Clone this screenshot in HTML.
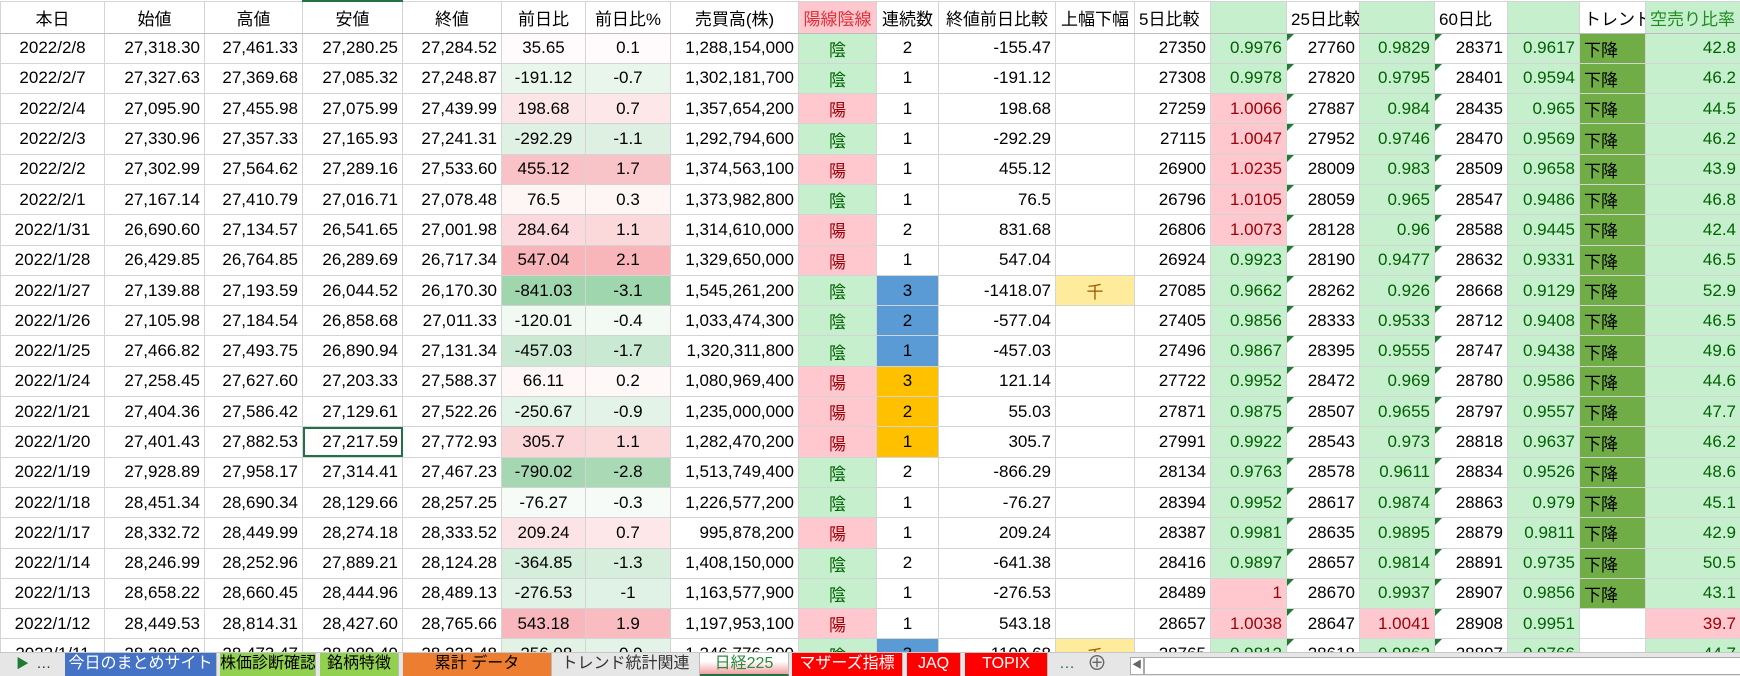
<!DOCTYPE html>
<html><head><meta charset="utf-8"><style>
body{margin:0;width:1740px;height:675px;overflow:hidden;background:#fff;font-family:"Liberation Sans","Noto Sans CJK JP",sans-serif;}
#wrap{position:absolute;left:0;top:0;width:1740px;height:652px;overflow:hidden;}
table{border-collapse:collapse;table-layout:fixed;width:1740px;font-size:17px;color:#000;}
td{border:1px solid #d4d4d4;height:30.3px;padding:0 4px;white-space:nowrap;overflow:hidden;text-align:right;box-sizing:border-box;}
tr.h td{height:32px;text-align:center;border-bottom:1px solid #bdbdbd;}
.c{text-align:center}.l{text-align:left!important}
.g{background:#c6efce;color:#006100}
.r{background:#ffc7ce;color:#9c0006}
.rh{background:#ffc7ce;color:#e0303a}
.gh{background:#c6efce;color:#228b22}
.b{background:#5b9bd5}.o{background:#ffc000}
.y{background:#ffeb9c;color:#9c5700;text-align:center}
.t{background:#70ad47;text-align:left}
.tri{position:relative}
.tri:before{content:"";position:absolute;left:0;top:0;border-top:7px solid #1e7b34;border-right:7px solid transparent;}
.sel{outline:2px solid #217346;outline-offset:-2px}
#tabs{position:absolute;left:0;top:652px;width:1740px;height:23px;background:#e6e6e6;border-top:1px solid #c8c8c8;font-size:16px;}
.tab{position:absolute;top:0;height:23px;line-height:22px;text-align:center;border-right:1px solid #bbb;box-sizing:border-box;white-space:nowrap;overflow:hidden;}
</style></head><body>
<div id="wrap"><table>
<colgroup><col style="width:104px"><col style="width:100px"><col style="width:98px"><col style="width:100px"><col style="width:99px"><col style="width:84px"><col style="width:85px"><col style="width:128px"><col style="width:78px"><col style="width:62px"><col style="width:117px"><col style="width:79px"><col style="width:76px"><col style="width:76px"><col style="width:73px"><col style="width:75px"><col style="width:73px"><col style="width:72px"><col style="width:66px"><col style="width:95px"></colgroup>
<tr class="h"><td>本日</td><td>始値</td><td>高値</td><td style="border-top:2px solid #217346">安値</td><td>終値</td><td>前日比</td><td>前日比%</td><td>売買高(株)</td><td class="rh">陽線陰線</td><td>連続数</td><td>終値前日比較</td><td>上幅下幅</td><td class="l">5日比較</td><td class="g"></td><td class="l">25日比較</td><td class="g"></td><td class="l">60日比</td><td class="g"></td><td class="l">トレンド</td><td class="gh l">空売り比率</td></tr>
<tr><td class="c">2022/2/8</td><td>27,318.30</td><td>27,461.33</td><td>27,280.25</td><td>27,284.52</td><td class="c" style="background:rgb(255,250,251)">35.65</td><td class="c" style="background:rgb(255,251,252)">0.1</td><td>1,288,154,000</td><td class="g c">陰</td><td class="c">2</td><td>-155.47</td><td></td><td>27350</td><td class="g">0.9976</td><td class="tri">27760</td><td class="g">0.9829</td><td class="tri">28371</td><td class="g">0.9617</td><td class="t">下降</td><td class="g">42.8</td></tr>
<tr><td class="c">2022/2/7</td><td>27,327.63</td><td>27,369.68</td><td>27,085.32</td><td>27,248.87</td><td class="c" style="background:rgb(233,246,236)">-191.12</td><td class="c" style="background:rgb(233,246,236)">-0.7</td><td>1,302,181,700</td><td class="g c">陰</td><td class="c">1</td><td>-191.12</td><td></td><td>27308</td><td class="g">0.9978</td><td class="tri">27820</td><td class="g">0.9795</td><td class="tri">28401</td><td class="g">0.9594</td><td class="t">下降</td><td class="g">46.2</td></tr>
<tr><td class="c">2022/2/4</td><td>27,095.90</td><td>27,455.98</td><td>27,075.99</td><td>27,439.99</td><td class="c" style="background:rgb(252,229,230)">198.68</td><td class="c" style="background:rgb(253,231,232)">0.7</td><td>1,357,654,200</td><td class="r c">陽</td><td class="c">1</td><td>198.68</td><td></td><td>27259</td><td class="r">1.0066</td><td class="tri">27887</td><td class="g">0.984</td><td class="tri">28435</td><td class="g">0.965</td><td class="t">下降</td><td class="g">44.5</td></tr>
<tr><td class="c">2022/2/3</td><td>27,330.96</td><td>27,357.33</td><td>27,165.93</td><td>27,241.31</td><td class="c" style="background:rgb(222,241,226)">-292.29</td><td class="c" style="background:rgb(221,240,226)">-1.1</td><td>1,292,794,600</td><td class="g c">陰</td><td class="c">1</td><td>-292.29</td><td></td><td>27115</td><td class="r">1.0047</td><td class="tri">27952</td><td class="g">0.9746</td><td class="tri">28470</td><td class="g">0.9569</td><td class="t">下降</td><td class="g">46.2</td></tr>
<tr><td class="c">2022/2/2</td><td>27,302.99</td><td>27,564.62</td><td>27,289.16</td><td>27,533.60</td><td class="c" style="background:rgb(249,194,198)">455.12</td><td class="c" style="background:rgb(249,196,200)">1.7</td><td>1,374,563,100</td><td class="r c">陽</td><td class="c">1</td><td>455.12</td><td></td><td>26900</td><td class="r">1.0235</td><td class="tri">28009</td><td class="g">0.983</td><td class="tri">28509</td><td class="g">0.9658</td><td class="t">下降</td><td class="g">43.9</td></tr>
<tr><td class="c">2022/2/1</td><td>27,167.14</td><td>27,410.79</td><td>27,016.71</td><td>27,078.48</td><td class="c" style="background:rgb(254,245,245)">76.5</td><td class="c" style="background:rgb(254,245,245)">0.3</td><td>1,373,982,800</td><td class="g c">陰</td><td class="c">1</td><td>76.5</td><td></td><td>26796</td><td class="r">1.0105</td><td class="tri">28059</td><td class="g">0.965</td><td class="tri">28547</td><td class="g">0.9486</td><td class="t">下降</td><td class="g">46.8</td></tr>
<tr><td class="c">2022/1/31</td><td>26,690.60</td><td>27,134.57</td><td>26,541.65</td><td>27,001.98</td><td class="c" style="background:rgb(251,217,220)">284.64</td><td class="c" style="background:rgb(251,217,219)">1.1</td><td>1,314,610,000</td><td class="r c">陽</td><td class="c">2</td><td>831.68</td><td></td><td>26806</td><td class="r">1.0073</td><td class="tri">28128</td><td class="g">0.96</td><td class="tri">28588</td><td class="g">0.9445</td><td class="t">下降</td><td class="g">42.4</td></tr>
<tr><td class="c">2022/1/28</td><td>26,429.85</td><td>26,764.85</td><td>26,289.69</td><td>26,717.34</td><td class="c" style="background:rgb(248,182,187)">547.04</td><td class="c" style="background:rgb(248,182,187)">2.1</td><td>1,329,650,000</td><td class="r c">陽</td><td class="c">1</td><td>547.04</td><td></td><td>26924</td><td class="g">0.9923</td><td class="tri">28190</td><td class="g">0.9477</td><td class="tri">28632</td><td class="g">0.9331</td><td class="t">下降</td><td class="g">46.5</td></tr>
<tr><td class="c">2022/1/27</td><td>27,139.88</td><td>27,193.59</td><td>26,044.52</td><td>26,170.30</td><td class="c" style="background:rgb(159,214,173)">-841.03</td><td class="c" style="background:rgb(159,214,173)">-3.1</td><td>1,545,261,200</td><td class="g c">陰</td><td class="c b">3</td><td>-1418.07</td><td class="y">千</td><td>27085</td><td class="g">0.9662</td><td class="tri">28262</td><td class="g">0.926</td><td class="tri">28668</td><td class="g">0.9129</td><td class="t">下降</td><td class="g">52.9</td></tr>
<tr><td class="c">2022/1/26</td><td>27,105.98</td><td>27,184.54</td><td>26,858.68</td><td>27,011.33</td><td class="c" style="background:rgb(241,249,243)">-120.01</td><td class="c" style="background:rgb(243,250,244)">-0.4</td><td>1,033,474,300</td><td class="g c">陰</td><td class="c b">2</td><td>-577.04</td><td></td><td>27405</td><td class="g">0.9856</td><td class="tri">28333</td><td class="g">0.9533</td><td class="tri">28712</td><td class="g">0.9408</td><td class="t">下降</td><td class="g">46.5</td></tr>
<tr><td class="c">2022/1/25</td><td>27,466.82</td><td>27,493.75</td><td>26,890.94</td><td>27,131.34</td><td class="c" style="background:rgb(203,233,210)">-457.03</td><td class="c" style="background:rgb(202,233,210)">-1.7</td><td>1,320,311,800</td><td class="g c">陰</td><td class="c b">1</td><td>-457.03</td><td></td><td>27496</td><td class="g">0.9867</td><td class="tri">28395</td><td class="g">0.9555</td><td class="tri">28747</td><td class="g">0.9438</td><td class="t">下降</td><td class="g">49.6</td></tr>
<tr><td class="c">2022/1/24</td><td>27,258.45</td><td>27,627.60</td><td>27,203.33</td><td>27,588.37</td><td class="c" style="background:rgb(254,246,247)">66.11</td><td class="c" style="background:rgb(254,248,249)">0.2</td><td>1,080,969,400</td><td class="r c">陽</td><td class="c o">3</td><td>121.14</td><td></td><td>27722</td><td class="g">0.9952</td><td class="tri">28472</td><td class="g">0.969</td><td class="tri">28780</td><td class="g">0.9586</td><td class="t">下降</td><td class="g">44.6</td></tr>
<tr><td class="c">2022/1/21</td><td>27,404.36</td><td>27,586.42</td><td>27,129.61</td><td>27,522.26</td><td class="c" style="background:rgb(226,243,231)">-250.67</td><td class="c" style="background:rgb(227,243,231)">-0.9</td><td>1,235,000,000</td><td class="r c">陽</td><td class="c o">2</td><td>55.03</td><td></td><td>27871</td><td class="g">0.9875</td><td class="tri">28507</td><td class="g">0.9655</td><td class="tri">28797</td><td class="g">0.9557</td><td class="t">下降</td><td class="g">47.7</td></tr>
<tr><td class="c">2022/1/20</td><td>27,401.43</td><td>27,882.53</td><td class="sel">27,217.59</td><td>27,772.93</td><td class="c" style="background:rgb(251,214,217)">305.7</td><td class="c" style="background:rgb(251,217,219)">1.1</td><td>1,282,470,200</td><td class="r c">陽</td><td class="c o">1</td><td>305.7</td><td></td><td>27991</td><td class="g">0.9922</td><td class="tri">28543</td><td class="g">0.973</td><td class="tri">28818</td><td class="g">0.9637</td><td class="t">下降</td><td class="g">46.2</td></tr>
<tr><td class="c">2022/1/19</td><td>27,928.89</td><td>27,958.17</td><td>27,314.41</td><td>27,467.23</td><td class="c" style="background:rgb(165,216,178)">-790.02</td><td class="c" style="background:rgb(169,218,181)">-2.8</td><td>1,513,749,400</td><td class="g c">陰</td><td class="c">2</td><td>-866.29</td><td></td><td>28134</td><td class="g">0.9763</td><td class="tri">28578</td><td class="g">0.9611</td><td class="tri">28834</td><td class="g">0.9526</td><td class="t">下降</td><td class="g">48.6</td></tr>
<tr><td class="c">2022/1/18</td><td>28,451.34</td><td>28,690.34</td><td>28,129.66</td><td>28,257.25</td><td class="c" style="background:rgb(246,251,248)">-76.27</td><td class="c" style="background:rgb(246,251,247)">-0.3</td><td>1,226,577,200</td><td class="g c">陰</td><td class="c">1</td><td>-76.27</td><td></td><td>28394</td><td class="g">0.9952</td><td class="tri">28617</td><td class="g">0.9874</td><td class="tri">28863</td><td class="g">0.979</td><td class="t">下降</td><td class="g">45.1</td></tr>
<tr><td class="c">2022/1/17</td><td>28,332.72</td><td>28,449.99</td><td>28,274.18</td><td>28,333.52</td><td class="c" style="background:rgb(252,227,229)">209.24</td><td class="c" style="background:rgb(253,231,232)">0.7</td><td>995,878,200</td><td class="r c">陽</td><td class="c">1</td><td>209.24</td><td></td><td>28387</td><td class="g">0.9981</td><td class="tri">28635</td><td class="g">0.9895</td><td class="tri">28879</td><td class="g">0.9811</td><td class="t">下降</td><td class="g">42.9</td></tr>
<tr><td class="c">2022/1/14</td><td>28,246.99</td><td>28,252.96</td><td>27,889.21</td><td>28,124.28</td><td class="c" style="background:rgb(213,237,219)">-364.85</td><td class="c" style="background:rgb(215,238,221)">-1.3</td><td>1,408,150,000</td><td class="g c">陰</td><td class="c">2</td><td>-641.38</td><td></td><td>28416</td><td class="g">0.9897</td><td class="tri">28657</td><td class="g">0.9814</td><td class="tri">28891</td><td class="g">0.9735</td><td class="t">下降</td><td class="g">50.5</td></tr>
<tr><td class="c">2022/1/13</td><td>28,658.22</td><td>28,660.45</td><td>28,444.96</td><td>28,489.13</td><td class="c" style="background:rgb(223,242,228)">-276.53</td><td class="c" style="background:rgb(224,242,229)">-1</td><td>1,163,577,900</td><td class="g c">陰</td><td class="c">1</td><td>-276.53</td><td></td><td>28489</td><td class="r">1</td><td class="tri">28670</td><td class="g">0.9937</td><td class="tri">28907</td><td class="g">0.9856</td><td class="t">下降</td><td class="g">43.1</td></tr>
<tr><td class="c">2022/1/12</td><td>28,449.53</td><td>28,814.31</td><td>28,427.60</td><td>28,765.66</td><td class="c" style="background:rgb(248,183,188)">543.18</td><td class="c" style="background:rgb(249,189,193)">1.9</td><td>1,197,953,100</td><td class="r c">陽</td><td class="c">1</td><td>543.18</td><td></td><td>28657</td><td class="r">1.0038</td><td class="tri">28647</td><td class="r">1.0041</td><td class="tri">28908</td><td class="g">0.9951</td><td></td><td class="r">39.7</td></tr>
<tr><td class="c">2022/1/11</td><td>28,380.90</td><td>28,473.47</td><td>28,089.49</td><td>28,222.48</td><td class="c" style="background:rgb(226,243,230)">-256.08</td><td class="c" style="background:rgb(227,243,231)">-0.9</td><td>1,246,776,300</td><td class="g c">陰</td><td class="c b">3</td><td>-1109.68</td><td class="y">千</td><td>28765</td><td class="g">0.9812</td><td class="tri">28618</td><td class="g">0.9862</td><td class="tri">28897</td><td class="g">0.9766</td><td></td><td class="g">44.7</td></tr>
</table></div>
<div id="tabs">
<div class="tab" style="left:0;width:65px;border:none;color:#1e7b34;font-size:13px;text-align:left;padding-left:16px">▶ &nbsp;<span style="color:#333;font-size:15px">…</span></div>
<div class="tab" style="left:65px;width:152px;background:#4472c4;color:#fff">今日のまとめサイト</div>
<div class="tab" style="left:220px;width:96px;background:#92d050">株価診断確認</div>
<div class="tab" style="left:320px;width:79px;background:#92d050">銘柄特徴</div>
<div class="tab" style="left:403px;width:149px;background:#ed7d31">累計 データ</div>
<div class="tab" style="left:552px;width:148px;background:#e6e6e6;color:#333">トレンド統計関連</div>
<div class="tab" style="left:700px;width:89px;background:linear-gradient(#fff,#fff 40%,#f4a0a0);color:#2b8a3e;border-bottom:2px solid #217346">日経225</div>
<div class="tab" style="left:792px;width:111px;background:#ff0000;color:#fff">マザーズ指標</div>
<div class="tab" style="left:907px;width:54px;background:#ff0000;color:#fff">JAQ</div>
<div class="tab" style="left:965px;width:83px;background:#ff0000;color:#fff">TOPIX</div>
<div class="tab" style="left:1052px;width:30px;border:none;color:#1e7b34">…</div>
<div class="tab" style="left:1082px;width:30px;border:none;color:#666;font-size:20px">⊕</div>
<div style="position:absolute;left:1130px;top:4px;width:12px;height:16px;border:1px solid #aaa;background:#fff;font-size:10px;line-height:16px;color:#666;text-align:center">◀</div>
<div style="position:absolute;left:1144px;top:4px;width:596px;height:16px;border:1px solid #aaa;background:#fff"></div>
</div>
</body></html>
